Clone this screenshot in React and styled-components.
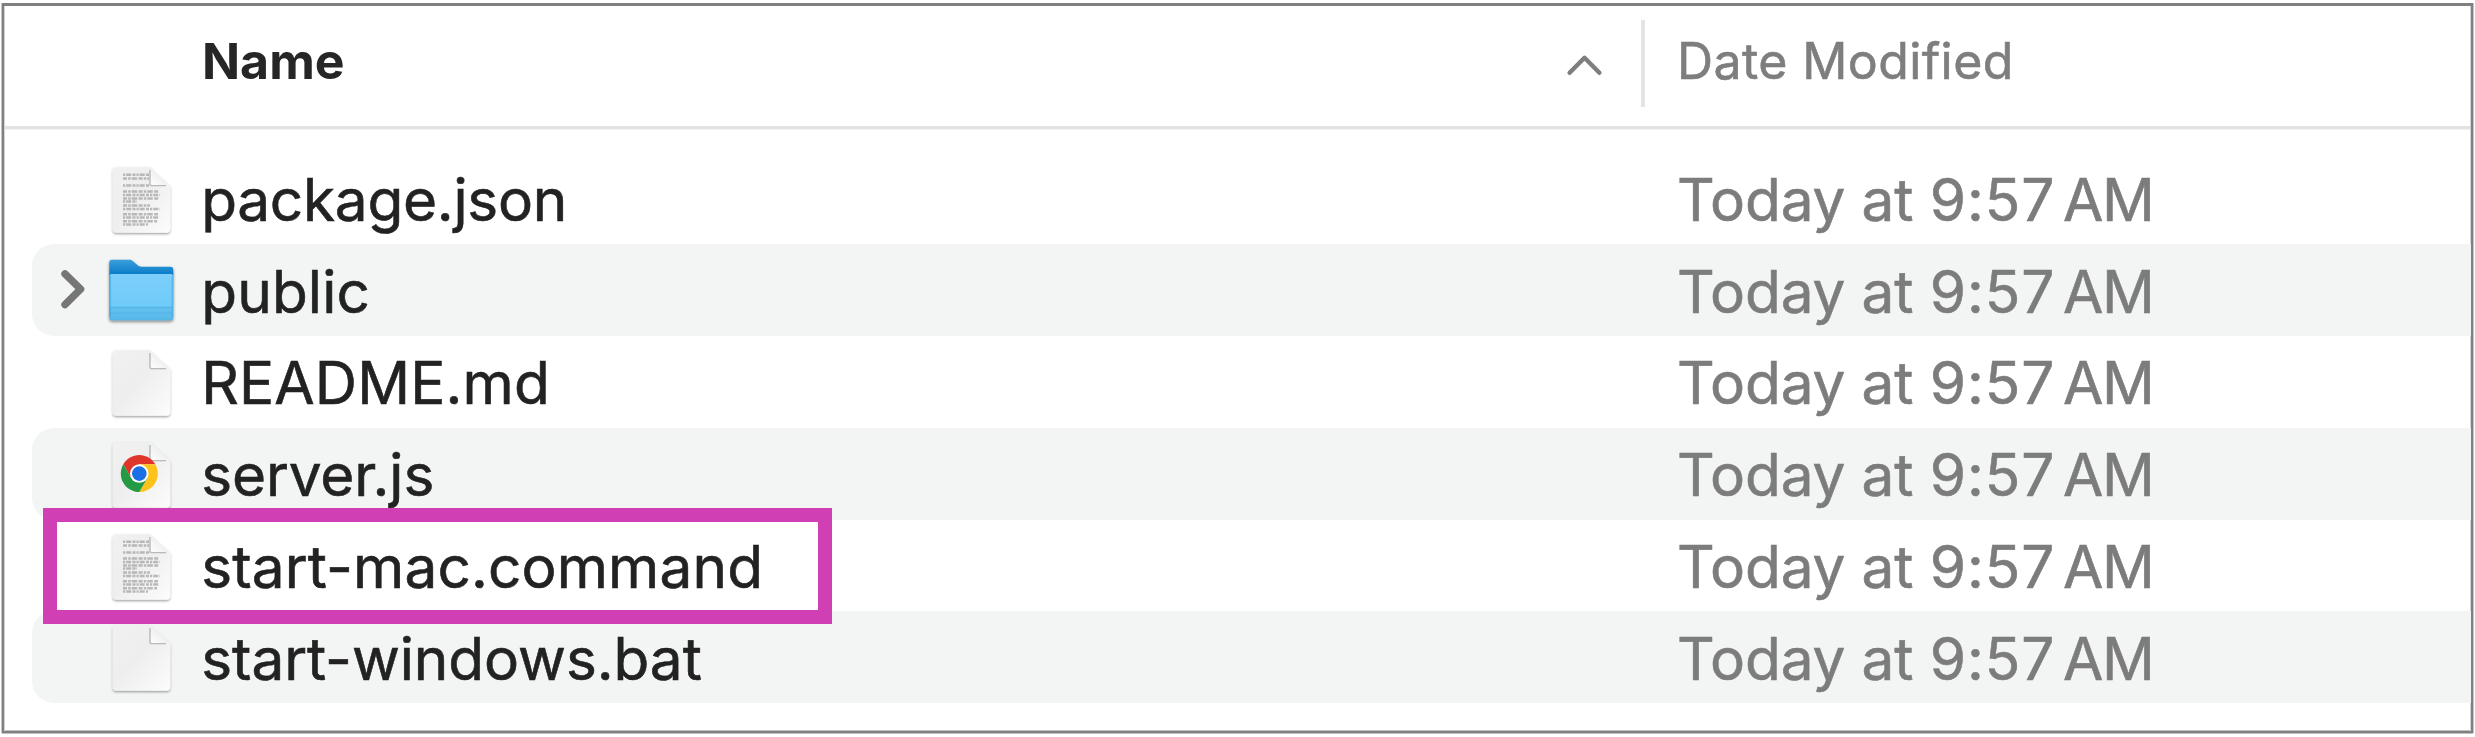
import React from "react";
import styled, { createGlobalStyle } from "styled-components";

const GlobalStyle = createGlobalStyle`
  * { box-sizing: border-box; }
  body {
    margin: 0;
    background: #fff;
    font-family: Inter, "Liberation Sans", sans-serif;
    overflow: hidden;
  }
`;

const Page = styled.main`
  height: 737px;
  padding: 3px 2px 4px;
`;

const FinderWindow = styled.section`
  height: 730px;
  display: flex;
  flex-direction: column;
  background: #fff;
  border: 2px solid #808080;
  border-top-width: 3px;
  box-shadow:
    -1px 0 #c4c4c4,
    1px 0 #c4c4c4,
    0 1px #c0c0c0,
    inset 1px 0 #d4d4d4,
    inset -1px 0 #d4d4d4,
    inset 0 -1px #c0c0c0;
`;

const Header = styled.header`
  flex: none;
  height: 123px;
  display: flex;
  align-items: flex-start;
  margin: 0 1px;
  border-bottom: 3px solid #e1e3e2;
  box-shadow: 0 1px #f1f2f2;
  font-size: 50px;
  line-height: 111px;
  white-space: pre;
`;

const NameHeading = styled.div`
  width: 1636px;
  display: flex;
  justify-content: space-between;
  padding: 0 36px 0 197px;
  color: #262626;
  font-weight: 700;
`;

const SortCaret = styled.svg`
  width: 40px;
  height: 30px;
  margin-top: 44px;
`;

const DateHeading = styled.div`
  display: flex;
  color: #7e7e7e;
  letter-spacing: 0.4px;
  -webkit-text-stroke: 0.6px currentColor;

  &::before {
    content: "";
    width: 4px;
    height: 87px;
    margin: 14px 32px 0 0;
    background: #e3e5e4;
  }
`;

const List = styled.div`
  padding: 23.5px 0 0 28px;
`;

const Row = styled.div`
  position: relative;
  height: 91.75px;
  display: flex;
  align-items: center;
  border-radius: 22px 0 0 22px;
  background: ${(p) => (p.$striped ? "#f3f5f4" : "transparent")};
`;

const Disclosure = styled.div`
  width: 76px;
  height: 91px;
  flex: none;
`;

const Icon = styled.svg`
  width: 93.2px;
  height: 91.75px;
  flex: none;
  overflow: visible;
`;

const FileName = styled.div`
  width: 1475.8px;
  padding-top: 3px;
  color: #222;
  font-size: 58.5px;
  line-height: 88px;
  letter-spacing: ${(p) => p.$tracking}px;
  -webkit-text-stroke: 0.6px currentColor;
  white-space: pre;
`;

const Modified = styled.div`
  display: flex;
  padding-top: 3px;
  color: #7c7c7c;
  font-size: 58.5px;
  line-height: 88px;
  letter-spacing: -0.13px;
  -webkit-text-stroke: 0.6px currentColor;
  white-space: pre;
`;

const Clock = styled.span`
  letter-spacing: 1px;
`;

const Meridiem = styled.span`
  margin-left: 7.5px;
  letter-spacing: -1.3px;
`;

const Highlight = styled.div`
  position: absolute;
  z-index: 1;
  left: 11.3px;
  top: -11.5px;
  width: 788.4px;
  height: 116.4px;
  border: 14px solid #d13fb5;
`;

const TEXT_LINES = [
  [21.8, 27], [25.4, 26], [32.4, 27],
  [38.6, 36], [42, 37], [45.6, 36], [48.6, 14],
  [52.4, 27], [56, 37],
  [61.2, 35], [64.6, 36], [68.2, 34], [71.6, 25],
];

function Defs() {
  return (
    <svg width="0" height="0" style={{ display: "block" }} aria-hidden="true">
      <defs>
        <linearGradient id="paper" x1="0" y1="0" x2="1" y2="1">
          <stop offset="0" stopColor="#f1f1f1" />
          <stop offset="0.45" stopColor="#eeeeee" />
          <stop offset="1" stopColor="#fcfcfc" />
        </linearGradient>
        <linearGradient id="fold" x1="0" y1="1" x2="1" y2="0">
          <stop offset="0" stopColor="#ffffff" />
          <stop offset="0.5" stopColor="#f0f0f0" />
        </linearGradient>
        <linearGradient id="folderBack" x1="0" y1="0" x2="0" y2="1">
          <stop offset="0" stopColor="#3a9fdb" />
          <stop offset="0.24" stopColor="#0b7cc8" />
          <stop offset="1" stopColor="#4ba9dc" />
        </linearGradient>
        <linearGradient id="folderFront" x1="0" y1="0" x2="0" y2="1">
          <stop offset="0" stopColor="#7ccffa" />
          <stop offset="0.7" stopColor="#6fcbf9" />
          <stop offset="0.72" stopColor="#66c2f0" />
          <stop offset="1" stopColor="#56b8e9" />
        </linearGradient>
        <filter id="soft" x="-20%" y="-20%" width="140%" height="150%">
          <feDropShadow dx="0" dy="1.3" stdDeviation="1.3" floodColor="#000" floodOpacity="0.38" />
        </filter>
        <filter id="folderShadow" x="-20%" y="-20%" width="140%" height="150%">
          <feDropShadow dx="0" dy="1.6" stdDeviation="1.7" floodColor="#000" floodOpacity="0.48" />
        </filter>
      </defs>
    </svg>
  );
}

function Document({ children, badge }) {
  return (
    <Icon viewBox="0 0 93.2 91.75">
      <path
        d="M8.5 14.2H42L62.3 33V76a3.8 3.8 0 0 1-3.8 3.8H8.5A3.8 3.8 0 0 1 4.7 76V18a3.8 3.8 0 0 1 3.8-3.8Z"
        fill="url(#paper)"
        filter="url(#soft)"
      />
      {children}
      <path d="M42 14.6V30.5a2 2 0 0 0 2 2H61.5Z" fill="url(#fold)" />
      <path d="M42 17V30.8a1.8 1.8 0 0 0 1.8 1.8H58" fill="none" stroke="#808080" strokeOpacity="0.5" strokeWidth="1.4" />
      {badge}
    </Icon>
  );
}

function TextDocument() {
  return (
    <Document>
      {TEXT_LINES.map(([y, w], i) => (
        <path
          key={y}
          d={`M15 ${y}h${w}`}
          stroke="#a0a0a0"
          strokeOpacity="0.7"
          strokeWidth="2.5"
          strokeDasharray={i % 2 ? "4 1.2 2.5 1 5.5 1.4" : "2.2 1 5 1.3 3 1"}
        />
      ))}
    </Document>
  );
}

function ChromeLogo() {
  return (
    <g transform="translate(31.3 45.6)">
      <path d="M-16.02-9.25A18.5 18.5 0 0 1 16.02-9.25H0L-8.01 4.62Z" fill="#e0352b" />
      <path d="M16.02-9.25A18.5 18.5 0 0 1 0 18.5L8.01 4.62 0-9.25Z" fill="#fdc31b" />
      <path d="M0 18.5A18.5 18.5 0 0 1-16.02-9.25L-8.01 4.62H8.01Z" fill="#249a45" />
      <circle r="9.25" fill="#fff" />
      <circle r="7.3" fill="#1b6fe6" />
    </g>
  );
}

function ChromeDocument() {
  return <Document badge={<ChromeLogo />} />;
}

function Folder() {
  return (
    <Icon viewBox="0 0 93.2 91.75">
      <path
        d="M4 15.8H21.5c1.6 0 2.6.5 3.8 1.6L29.4 21c1.3 1.2 2.3 1.7 4 1.7H62.3a3 3 0 0 1 3 3V73a3.2 3.2 0 0 1-3.2 3.2H4.5A3.2 3.2 0 0 1 1.3 73V18.5A2.7 2.7 0 0 1 4 15.8Z"
        fill="url(#folderBack)"
        filter="url(#folderShadow)"
      />
      <path
        d="M3.8 30H62.8a2.2 2.2 0 0 1 2.2 2.2V72.6a3.2 3.2 0 0 1-3.2 3.2H4.8a3.2 3.2 0 0 1-3.2-3.2V32.2A2.2 2.2 0 0 1 3.8 30Z"
        fill="url(#folderFront)"
      />
      <path d="M1.8 63.6H64.8M1.8 69H64.8" stroke="#4eafe2" strokeWidth="1" strokeOpacity="0.75" />
      <path d="M2.4 32V73M64.3 32V73" stroke="#45a8df" strokeWidth="1.4" strokeOpacity="0.6" />
    </Icon>
  );
}

const ICONS = { text: TextDocument, blank: Document, chrome: ChromeDocument, folder: Folder };

const FILES = [
  { name: "package.json", icon: "text", tracking: -0.28 },
  { name: "public", icon: "folder", tracking: 0.15 },
  { name: "README.md", icon: "blank", tracking: 0.15 },
  { name: "server.js", icon: "chrome", tracking: -0.12 },
  { name: "start-mac.command", icon: "text", tracking: 0.14, highlighted: true },
  { name: "start-windows.bat", icon: "blank", tracking: -0.05 },
];

function FileRow({ file, striped }) {
  const FileIcon = ICONS[file.icon];
  return (
    <Row $striped={striped}>
      <Disclosure>
        {file.icon === "folder" && (
          <svg width="76" height="91" fill="none" stroke="#767676" strokeWidth="7.4" strokeLinecap="round" strokeLinejoin="round">
            <path d="M33 28.8L48.6 44.2 33 59.6" />
          </svg>
        )}
      </Disclosure>
      <FileIcon />
      <FileName $tracking={file.tracking}>{file.name}</FileName>
      <Modified>
        <span>Today at </span>
        <Clock>9:57</Clock>
        <Meridiem>AM</Meridiem>
      </Modified>
      {file.highlighted && <Highlight />}
    </Row>
  );
}

export default function App() {
  return (
    <Page>
      <GlobalStyle />
      <FinderWindow>
        <Defs />
        <Header>
          <NameHeading>
            <span>Name</span>
            <SortCaret viewBox="0 0 40 30" fill="none" stroke="#7e7e7e" strokeWidth="4.4" strokeLinecap="round" strokeLinejoin="round">
              <path d="M4.6 22.8L19.5 7.8 34.4 22.8" />
            </SortCaret>
          </NameHeading>
          <DateHeading>Date Modified</DateHeading>
        </Header>
        <List>
          {FILES.map((file, i) => (
            <FileRow key={file.name} file={file} striped={i % 2 === 1} />
          ))}
        </List>
      </FinderWindow>
    </Page>
  );
}
